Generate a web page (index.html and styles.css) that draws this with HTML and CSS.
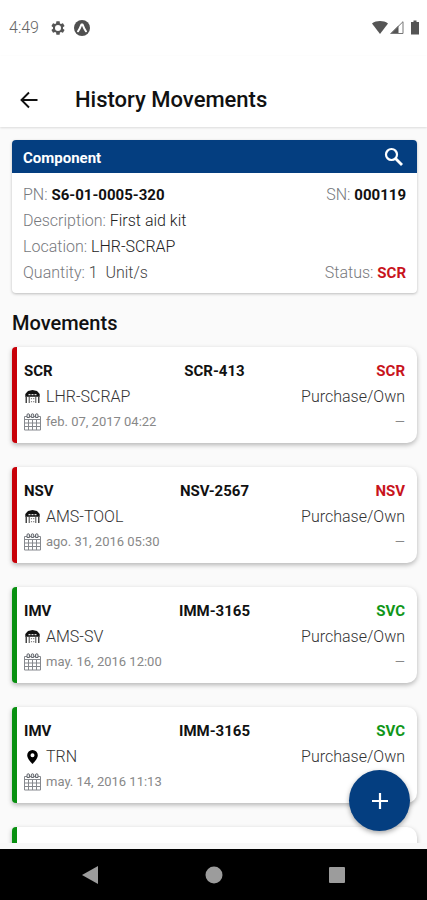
FILE: index.html
```html
<!DOCTYPE html>
<html lang="en">
<head>
<meta charset="utf-8">
<meta name="viewport" content="width=device-width, initial-scale=1">
<title>History Movements</title>
<link rel="stylesheet" href="styles.css">
</head>
<body>
<svg class="sprite" aria-hidden="true">
  <symbol id="warehouse" viewBox="0 0 16 14">
    <path fill="#111" d="M8 0 3.500 1 .8 4v2.800h14.400V4l-2.700-3z"/>
    <path fill="#ddd" d="M4 4h2v1.300H4zM7 4h2v1.300H7zM10 4h2v1.300h-2z"/>
    <path fill="#444" d="M1 6h1.500v7H1zM13.500 6H15v7h-1.500zM4.200 6.500h1v6.500h-1zM10.800 6.500h1v6.500h-1z"/>
    <path fill="#888" d="M6.400 8h1.200v1.200H6.400zM8.600 8h1.200v1.200H8.600zM6.400 11h1.200v1.200H6.400zM8.600 11h1.200v1.200H8.600z"/>
  </symbol>
  <symbol id="calendar" viewBox="0 0 17 18">
    <path fill="none" stroke="#85888d" d="M.5 3.500h16v13.500H.5zM.5 6.500h16M.5 10h16M.5 13.500h16M4.500 6.500V17M8.500 6.500V17M12.500 6.500V17"/>
    <path fill="#e5e7ea" stroke="#65686e" d="M3 4.500V2a1.200 1.200 0 0 1 2.500 0v2.500zM7.250 4.500V2a1.200 1.200 0 0 1 2.500 0v2.500zM11.500 4.500V2A1.200 1.200 0 0 1 14 2v2.500z"/>
  </symbol>
  <symbol id="pin" viewBox="0 0 12 16">
    <path fill="#000" fill-rule="evenodd" d="M6 1a5.300 5.300 0 0 0-5.300 5.300C.7 10 6 15 6 15s5.300-5 5.300-8.700A5.300 5.300 0 0 0 6 1zm0 3.300a2 2 0 1 1 0 4 2 2 0 0 1 0-4z"/>
  </symbol>
</svg>

<div class="status-bar">
  <span class="clock">4:49</span>
  <svg class="status-icon" viewBox="0 0 24 24" aria-hidden="true"><path fill="#555" d="M19.430 12.980c.04-.32.07-.64.07-.98s-.03-.66-.07-.98l2.110-1.650c.19-.15.24-.42.12-.64l-2-3.460c-.12-.22-.39-.3-.61-.22l-2.490 1c-.52-.4-1.080-.73-1.690-.98l-.38-2.650C14.460 2.180 14.250 2 14 2h-4c-.25 0-.46.18-.49.42l-.38 2.650c-.61.25-1.170.59-1.690.98l-2.490-1c-.23-.09-.49 0-.61.22l-2 3.460c-.13.22-.07.49.12.64l2.110 1.650c-.04.32-.07.65-.07.98s.03.66.07.98l-2.110 1.650c-.19.15-.24.42-.12.64l2 3.460c.12.22.39.3.61.22l2.490-1c.52.4 1.080.73 1.690.98l.38 2.650c.03.24.24.42.49.42h4c.25 0 .46-.18.49-.42l.38-2.650c.61-.25 1.170-.59 1.690-.98l2.490 1c.23.09.49 0 .61-.22l2-3.460c.12-.22.07-.49-.12-.64l-2.110-1.650zM12 16.500a4.500 4.500 0 1 1 0-9 4.500 4.500 0 0 1 0 9z"/></svg>
  <svg class="status-icon" viewBox="0 0 16 16" aria-hidden="true"><circle cx="8" cy="8" r="8" fill="#505050"/><path fill="none" stroke="#fff" stroke-width="2" stroke-linecap="round" stroke-linejoin="round" d="M4 11.300C5.500 9.500 6.500 7 7.400 4.600h1.200c.9 2.400 1.900 4.900 3.400 6.700"/></svg>
  <svg class="signals" viewBox="0 0 48 16" aria-hidden="true">
    <path fill="#555" d="M0 3.500C4.500.3 11.500.3 16 3.500L8 14z"/>
    <path fill="#555" d="M18 14 26.500 5.500V14z"/>
    <path fill="none" stroke="#777" d="M19 13.500 31 1.700v11.800z"/>
    <path fill="#555" d="M39 2h2.500V.5h3V2H47v12.500h-8z"/>
  </svg>
</div>

<header class="app-bar">
  <a class="back" href="#" aria-label="Back"><svg viewBox="0 0 18 18" aria-hidden="true"><path fill="none" stroke="#111" stroke-width="1.900" d="M17.500 9H2M9 1.500 1.500 9 9 16.500"/></svg></a>
  <h1>History Movements</h1>
</header>

<main>
  <section class="component">
    <div class="component-head">
      <h2>Component</h2>
      <button class="search" aria-label="Search"><svg viewBox="0 0 20 20" aria-hidden="true"><circle cx="7.500" cy="7.500" r="5.500" fill="none" stroke="#fff" stroke-width="2.200"/><path stroke="#fff" stroke-width="2.800" d="m11.500 11.500 6.500 6.500"/></svg></button>
    </div>
    <div class="component-body">
      <p><span>PN: <b>S6-01-0005-320</b></span><span>SN: <b>000119</b></span></p>
      <p><span>Description: <em>First aid kit</em></span></p>
      <p><span>Location: <em>LHR-SCRAP</em></span></p>
      <p><span>Quantity: <i>1&nbsp; Unit/s</i></span><span>Status: <b class="bad">SCR</b></span></p>
    </div>
  </section>

  <h2 class="list-title">Movements</h2>

  <div class="movements">
    <article class="card card-bad">
      <div class="row top"><b>SCR</b><b>SCR-413</b><b class="state bad">SCR</b></div>
      <div class="row place"><svg class="icon" aria-hidden="true"><use href="#warehouse"/></svg><span>LHR-SCRAP</span><span class="end">Purchase/Own</span></div>
      <div class="row date"><svg class="icon tall" aria-hidden="true"><use href="#calendar"/></svg><time>feb. 07, 2017 04:22</time><span class="end">—</span></div>
    </article>
    <article class="card card-bad">
      <div class="row top"><b>NSV</b><b>NSV-2567</b><b class="state bad">NSV</b></div>
      <div class="row place"><svg class="icon" aria-hidden="true"><use href="#warehouse"/></svg><span>AMS-TOOL</span><span class="end">Purchase/Own</span></div>
      <div class="row date"><svg class="icon tall" aria-hidden="true"><use href="#calendar"/></svg><time>ago. 31, 2016 05:30</time><span class="end">—</span></div>
    </article>
    <article class="card card-good">
      <div class="row top"><b>IMV</b><b>IMM-3165</b><b class="state good">SVC</b></div>
      <div class="row place"><svg class="icon" aria-hidden="true"><use href="#warehouse"/></svg><span>AMS-SV</span><span class="end">Purchase/Own</span></div>
      <div class="row date"><svg class="icon tall" aria-hidden="true"><use href="#calendar"/></svg><time>may. 16, 2016 12:00</time><span class="end">—</span></div>
    </article>
    <article class="card card-good">
      <div class="row top"><b>IMV</b><b>IMM-3165</b><b class="state good">SVC</b></div>
      <div class="row place"><svg class="icon tall" aria-hidden="true"><use href="#pin"/></svg><span>TRN</span><span class="end">Purchase/Own</span></div>
      <div class="row date"><svg class="icon tall" aria-hidden="true"><use href="#calendar"/></svg><time>may. 14, 2016 11:13</time></div>
    </article>
    <article class="card card-good card-next"></article>
  </div>
</main>

<footer class="system-nav">
  <button class="add" aria-label="Add movement"><svg viewBox="0 0 16 16" aria-hidden="true"><path stroke="#fff" stroke-width="2.200" d="M8 0v16M0 8h16"/></svg></button>
  <button aria-label="Back"><svg viewBox="0 0 18 18" aria-hidden="true"><path fill="#9c9c9c" d="M17 0v18L1 9z"/></svg></button>
  <button aria-label="Home"><svg viewBox="0 0 18 18" aria-hidden="true"><circle cx="9" cy="9" r="8.500" fill="#9c9c9c"/></svg></button>
  <button aria-label="Overview"><svg viewBox="0 0 18 18" aria-hidden="true"><rect x="1" y="1" width="16" height="16" rx="1" fill="#9c9c9c"/></svg></button>
</footer>
</body>
</html>
```
FILE: styles.css
```css
* {
  box-sizing: border-box;
}

body {
  margin: 0;
  height: 100vh;
  display: flex;
  flex-direction: column;
  overflow: hidden;
  background: #fff;
  color: #111;
  font: 15px/26px Roboto, sans-serif;
}

h1, h2, p {
  margin: 0;
}

button {
  padding: 0;
  border: 0;
  background: none;
}

svg {
  display: block;
}

b {
  font-weight: 700;
}

.sprite {
  position: absolute;
  width: 0;
  height: 0;
}

.status-bar {
  flex: none;
  display: flex;
  align-items: center;
  gap: 8px;
  height: 56px;
  padding: 0 7px 0 9px;
}

.clock {
  margin-right: 3px;
  color: #666;
  font-size: 16px;
  font-weight: 300;
}

.status-icon {
  width: 16px;
  height: 16px;
}

.signals {
  width: 48px;
  height: 16px;
  margin-left: auto;
}

.app-bar {
  z-index: 1;
  flex: none;
  display: flex;
  align-items: center;
  gap: 37px;
  height: 71px;
  padding: 16px 20px 0;
  background: #fff;
  box-shadow: 0 1px 2px rgba(0, 0, 0, 0.12);
}

.app-bar svg {
  width: 18px;
  height: 18px;
}

.app-bar h1 {
  font-size: 22px;
  font-weight: 500;
}

main {
  flex: 1;
  min-height: 0;
  overflow: hidden;
  padding: 13px 10px 0 12px;
  background: #fafafa;
}

.component {
  border-radius: 4px;
  background: #fff;
  box-shadow: 0 1px 3px rgba(0, 0, 0, 0.25);
}

.component-head {
  display: flex;
  align-items: center;
  justify-content: space-between;
  height: 33px;
  padding: 0 13px 0 11px;
  border-radius: 4px 4px 0 0;
  background: #043e80;
  color: #fff;
}

.component-head h2 {
  padding-top: 2px;
  font-size: 15px;
  font-weight: 700;
}

.search svg {
  width: 20px;
  height: 20px;
}

.component-body {
  padding: 9px 11px 7px;
  color: #77797d;
  font-size: 16px;
  font-weight: 300;
}

.component-body p {
  display: flex;
  justify-content: space-between;
}

.component-body b {
  color: #111;
  font-size: 15px;
}

.component-body em {
  color: #222;
  font-style: normal;
}

.component-body i {
  color: #444;
  font-style: normal;
}

.component-body b.bad,
.bad {
  color: #c8141c;
}

.good {
  color: #109618;
}

.list-title {
  margin: 17px 0 11px;
  font-size: 20px;
  font-weight: 500;
}

.movements {
  display: grid;
  gap: 24px;
}

.card {
  padding: 12px 12px 9px 7px;
  border-left: 5px solid;
  border-radius: 4px 10px 10px 4px;
  background: #fff;
  box-shadow: 0 2px 5px rgba(0, 0, 0, 0.28);
}

.card-bad {
  border-color: #c80008;
}

.card-good {
  border-color: #089010;
}

.card-next {
  height: 96px;
}

.row {
  display: flex;
  align-items: center;
  gap: 5px;
  line-height: 25px;
}

.top {
  display: grid;
  grid-template-columns: 1fr auto 1fr;
}

.state,
.end {
  margin-left: auto;
}

.place {
  color: #333;
  font-size: 16px;
  font-weight: 300;
}

.date {
  color: #888;
  font-size: 13px;
}

.icon {
  width: 17px;
  height: 14px;
}

.tall {
  height: 18px;
}

.place .tall {
  height: 16px;
}

.system-nav {
  position: relative;
  flex: none;
  display: flex;
  align-items: center;
  justify-content: space-between;
  height: 57px;
  padding: 0 81px;
  border-top: 6px solid #f8f8f8;
  background: #000;
}

.system-nav svg {
  width: 18px;
  height: 18px;
}

.add {
  position: absolute;
  right: 17px;
  bottom: 69px;
  display: grid;
  place-items: center;
  width: 61px;
  height: 61px;
  border-radius: 50%;
  background: #043e80;
  box-shadow: 0 2px 5px rgba(0, 0, 0, 0.35);
}

.system-nav .add svg {
  width: 16px;
  height: 16px;
}
```
